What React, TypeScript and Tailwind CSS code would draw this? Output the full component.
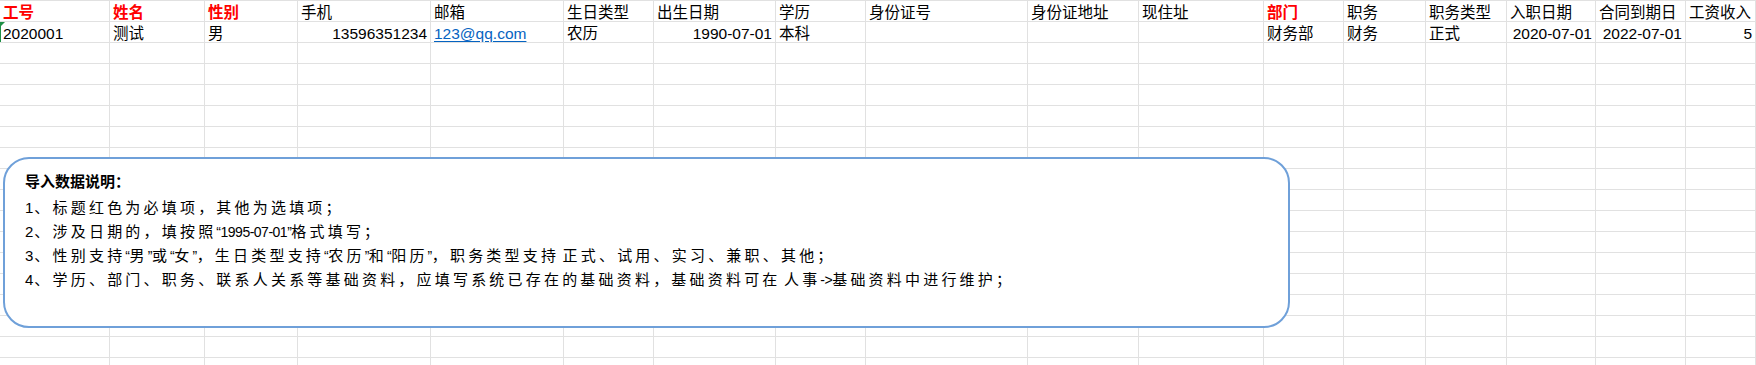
import type { ReactNode } from 'react';

const columns = [
    { title: '工号', required: true },
    { title: '姓名', required: true },
    { title: '性别', required: true },
    { title: '手机' },
    { title: '邮箱' },
    { title: '生日类型' },
    { title: '出生日期' },
    { title: '学历' },
    { title: '身份证号' },
    { title: '身份证地址' },
    { title: '现住址' },
    { title: '部门', required: true },
    { title: '职务' },
    { title: '职务类型' },
    { title: '入职日期' },
    { title: '合同到期日' },
    { title: '工资收入' },
];

const record = [
    '2020001', '测试', '男', '13596351234', '123@qq.com', '农历', '1990-07-01', '本科',
    '', '', '', '财务部', '财务', '正式', '2020-07-01', '2022-07-01', '5',
];

// numbers and dates sit on the right, like a spreadsheet does
const rightAligned = [3, 6, 14, 15, 16];

const rowClass =
    'grid grid-cols-[110px_95px_93px_133px_133px_90px_122px_90px_162px_111px_125px_80px_82px_81px_89px_90px_70px]';
const cellClass =
    'relative h-[21px] overflow-hidden whitespace-nowrap border-t border-r border-[#e1e1e1] px-[3px] pt-[3px] text-[15.5px] leading-[18px]';

const emptyRows = Array.from({ length: 16 }, (_, i) => i);

function Latin({ children }: { children: ReactNode }) {
    return <span className="text-[14px] tracking-[-0.5px]">{ children }</span>;
}

function Num({ children }: { children: ReactNode }) {
    return <span className="text-[15px] tracking-[1px]">{ children }</span>;
}

export default function App() {
    return (
        <div className="relative h-[365px] w-[1756px] overflow-hidden bg-white font-['Liberation_Sans','Noto_Sans_CJK_SC',sans-serif]">
            <div className={ rowClass }>
                { columns.map((c) => (
                    <div
                        key={ c.title }
                        className={ cellClass + (c.required ? ' font-bold text-[#ff0000]' : ' text-black') }
                    >
                        { c.title }
                    </div>
                )) }
            </div>

            <div className={ rowClass }>
                { record.map((v, i) => (
                    <div
                        key={ i }
                        className={ cellClass + ' text-black' + (rightAligned.includes(i) ? ' text-right' : '') }
                    >
                        { i === 0 && (
                            <>
                                <span className="absolute left-0 top-0 h-full w-px bg-[#1f8f45]" />
                                <span className="absolute left-0 top-0 h-0 w-0 border-r-[5px] border-t-[5px] border-r-transparent border-t-[#1f8f45]" />
                            </>
                        ) }
                        { i === 4
                            ? <span className="text-[#0563c1] underline underline-offset-2">{ v }</span>
                            : v }
                    </div>
                )) }
            </div>

            { emptyRows.map((r) => (
                <div key={ r } className={ rowClass }>
                    { columns.map((c) => (
                        <div key={ c.title } className={ cellClass } />
                    )) }
                </div>
            )) }

            <div className="absolute left-[3px] top-[157px] h-[171px] w-[1287px] rounded-[26px] border-2 border-[#6fa0d9] bg-white pl-[20px] pt-[11px] text-[15px] leading-[23.3px] text-black">
                <div className="mb-[3px] font-bold">导入数据说明：</div>
                <div className="tracking-[3.2px]">
                    <Num>1</Num>、标题红色为必填项，其他为选填项；
                </div>
                <div className="tracking-[3.2px]">
                    <Num>2</Num>、涉及日期的，填按照<Latin>“1995-07-01”</Latin>格式填写；
                </div>
                <div className="tracking-[3.2px]">
                    <Num>3</Num>、性别支持<Latin>“</Latin>男<Latin>”</Latin>或<Latin>“</Latin>女<Latin>”</Latin>，生日类型支持<Latin>“</Latin>农历<Latin>”</Latin>和<Latin>“</Latin>阳历<Latin>”</Latin>，职务类型支持<Latin> </Latin>正式、试用、实习、兼职、其他；
                </div>
                <div className="tracking-[3.2px]">
                    <Num>4</Num>、学历、部门、职务、联系人关系等基础资料，应填写系统已存在的基础资料，基础资料可在<Latin> </Latin>人事<Latin>-&gt;</Latin>基础资料中进行维护；
                </div>
            </div>
        </div>
    );
}
